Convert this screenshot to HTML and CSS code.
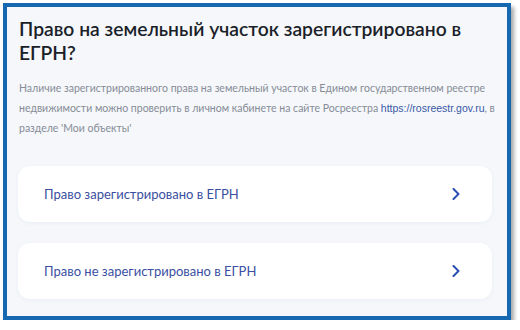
FILE: index.html
```html
<!DOCTYPE html>
<html lang="ru">
<head>
    <meta charset="UTF-8">
    <meta name="viewport" content="width=device-width, initial-scale=1.0">
    <title>Право на земельный участок</title>
    <link rel="stylesheet" href="styles.css">
</head>
<body>
    <div class="frame">
        <h1 class="title">Право на земельный участок зарегистрировано в ЕГРН?</h1>
        <p class="hint">
            Наличие зарегистрированного права на земельный участок в Едином государственном реестре
            недвижимости можно проверить в личном кабинете на сайте Росреестра
            <a href="#" class="link">https://rosreestr.gov.ru</a>, в разделе 'Мои объекты'
        </p>
        <div class="options">
            <a href="#" class="option">
                <span>Право зарегистрировано в ЕГРН</span>
                <svg class="chevron" width="8" height="12" viewBox="0 0 8 12">
                    <path d="M1.5 1 L6.5 6 L1.5 11" fill="none" stroke="#2a4fb3" stroke-width="2" stroke-linecap="round" stroke-linejoin="round"/>
                </svg>
            </a>
            <a href="#" class="option">
                <span>Право не зарегистрировано в ЕГРН</span>
                <svg class="chevron" width="8" height="12" viewBox="0 0 8 12">
                    <path d="M1.5 1 L6.5 6 L1.5 11" fill="none" stroke="#2a4fb3" stroke-width="2" stroke-linecap="round" stroke-linejoin="round"/>
                </svg>
            </a>
        </div>
    </div>
</body>
</html>
```

FILE: styles.css
```css
body {
    margin: 0;
    background: #fff;
    font-family: 'Lato', 'Noto Sans', sans-serif;
}
.frame {
    box-sizing: border-box;
    width: 508px;
    height: 317px;
    margin: 3px 0 0 3px;
    padding: 10px 15px 0 11px;
    border: 4px solid #1668b1;
    background: #f5f7fb;
    box-shadow: 3px 4px 4px rgba(0, 0, 0, 0.35);
}
.title {
    margin: 0 0 0 1px;
    font-size: 19.3px;
    line-height: 24px;
    font-weight: 600;
    color: #1b1f29;
}
.hint {
    margin: 13px -8px 0 1px;
    font-size: 10.5px;
    line-height: 20px;
    color: #868c96;
}
.link {
    color: #3a58a6;
    text-decoration: none;
    font-family: 'Liberation Sans', sans-serif;
}
.options {
    display: flex;
    flex-direction: column;
    gap: 21px;
    margin-top: 28px;
}
.option {
    display: flex;
    align-items: center;
    justify-content: space-between;
    height: 56px;
    padding: 0 32px 0 26px;
    border-radius: 12px;
    background: #fff;
    box-shadow: 0 1px 4px rgba(30, 50, 90, 0.05);
    color: #3a4fa2;
    font-size: 13px;
    text-decoration: none;
}
.chevron {
    display: block;
}
```
